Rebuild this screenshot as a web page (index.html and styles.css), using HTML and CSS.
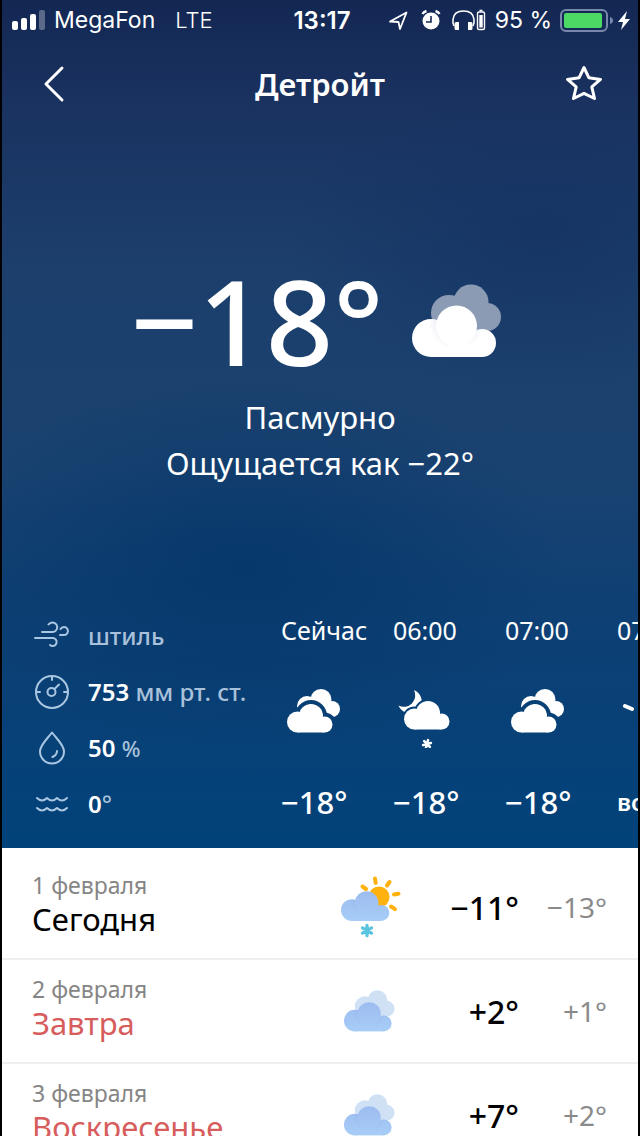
FILE: index.html
```
<!DOCTYPE html>
<html lang="ru">

<head>
    <meta charset="UTF-8">
    <meta name="viewport" content="width=device-width, initial-scale=1.0">
    <title>Погода — Детройт</title>
    <link rel="stylesheet" href="styles.css">
</head>

<body>
    <!-- общие фигуры для иконок -->
    <svg class="sprite" aria-hidden="true">
        <defs>
            <linearGradient id="blueCloud" gradientUnits="userSpaceOnUse" x1="0" y1="21" x2="0" y2="73">
                <stop offset="0" stop-color="#9dbcf0"/>
                <stop offset="1" stop-color="#a7cdf7"/>
            </linearGradient>
            <radialGradient id="shade" gradientUnits="userSpaceOnUse" cx="44.500" cy="38" r="28">
                <stop offset="0.700" stop-color="#6a78c0" stop-opacity="0.1"/>
                <stop offset="1" stop-color="#6a78c0" stop-opacity="0"/>
            </radialGradient>
            <clipPath id="lobes">
                <circle cx="19" cy="54" r="19"/>
                <circle cx="70" cy="59" r="14"/>
            </clipPath>
            <g id="front">
                <circle cx="19" cy="54" r="19"/>
                <circle cx="70" cy="59" r="14"/>
                <path d="M19 50h51v23H19z"/>
                <circle cx="44.500" cy="38" r="28" clip-path="url(#lobes)" class="shade"/>
                <circle cx="44.500" cy="42" r="20.500"/>
            </g>
            <g id="back">
                <circle cx="37" cy="29" r="18"/>
                <circle cx="59" cy="18" r="17.500"/>
                <circle cx="75" cy="33" r="14"/>
                <path d="M37 26h38v20H37z"/>
            </g>
            <g id="frontSmall">
                <circle cx="10.500" cy="33" r="10.500"/>
                <circle cx="24" cy="27" r="12"/>
                <circle cx="37.500" cy="35.500" r="8"/>
                <path d="M10.500 31h27v12.500h-27z"/>
            </g>
            <g id="backSmall">
                <circle cx="20" cy="17" r="10"/>
                <circle cx="34" cy="10.500" r="10.500"/>
                <circle cx="45" cy="20" r="8"/>
                <path d="M20 16h25v12H20z"/>
            </g>
            <g id="flake" fill="none" stroke="currentColor" stroke-linecap="round" stroke-width="3">
                <path d="M0-4.700v9.400M-4.100-2.400l8.200 4.800M-4.100 2.400l8.200-4.800"/>
            </g>
            <mask id="cut" maskUnits="userSpaceOnUse" x="-10" y="-10" width="80" height="80">
                <rect x="-10" y="-10" width="80" height="80" fill="#fff"/>
                <use href="#frontSmall" fill="#000" stroke="#000" stroke-width="8"/>
            </mask>
            <mask id="cutMoon" maskUnits="userSpaceOnUse" x="-10" y="-10" width="80" height="80">
                <rect x="-10" y="-10" width="80" height="80" fill="#fff"/>
                <use href="#frontSmall" fill="#000" stroke="#000" stroke-width="4"/>
            </mask>
            <symbol id="clouds" viewBox="0 0 90 74">
                <use href="#back" class="cloud-back"/>
                <use href="#front" class="cloud-front"/>
            </symbol>
            <symbol id="clouds-white" viewBox="0 0 64 64">
                <g transform="translate(6 5)" fill="#fff">
                    <use href="#backSmall" mask="url(#cut)"/>
                    <use href="#frontSmall"/>
                </g>
            </symbol>
            <symbol id="night-snow" viewBox="0 0 64 64">
                <g transform="translate(11 2)" fill="#fff">
                    <path mask="url(#cutMoon)" d="M10 4A12 12 0 1 1-5.500 19.500A11.500 11.500 0 0 0 10 4z"/>
                    <use href="#frontSmall"/>
                </g>
                <use href="#flake" transform="translate(34 60) rotate(15) scale(.85)"/>
            </symbol>
        </defs>
    </svg>

    <div class="app">
        <section class="hero">
            <div class="status">
                <div class="status-left">
                    <svg width="34" height="22" viewBox="0 0 34 22" fill="#fff" aria-hidden="true">
                        <rect x="0" y="12" width="6" height="9" rx="2"/>
                        <rect x="9" y="9" width="6" height="12" rx="2"/>
                        <rect x="18" y="5" width="6" height="16" rx="2"/>
                        <rect x="27" y="1" width="6" height="20" rx="2" opacity=".3"/>
                    </svg>
                    <span>MegaFon</span>
                    <span class="network">LTE</span>
                </div>
                <time class="clock">13:17</time>
                <div class="status-right">
                    <svg width="98" height="24" viewBox="0 0 98 24" fill="none" stroke="#fff" aria-hidden="true">
                        <path d="M1 13.500L17.500 4.500 11 21 9.500 14z" stroke-width="1.800" stroke-linejoin="round"/>
                        <circle cx="42" cy="13" r="8.500" fill="#fff" stroke="none"/>
                        <path d="M42 8v6h-5" stroke="#152a56" stroke-width="1.600"/>
                        <path d="M33.500 6q1-2 4-3M50.500 6q-1-2-4-3" stroke-width="2.400"/>
                        <path d="M65 18q-1.500-3-1-6.500C64.500 6 68.500 3 74.500 3S84.500 6 85 11.500q.5 3.500-1 6.500" stroke-width="1.600"/>
                        <path d="M67 14h3v8h-3q-1.500 0-1.500-1.500v-5q0-1.500 1.500-1.500zM79 14h3q1.500 0 1.500 1.500v5q0 1.500-1.500 1.500h-3z" fill="#fff" stroke="none"/>
                        <rect x="88.500" y="4" width="7" height="17.500" rx="1.500" stroke-width="1.400"/>
                        <path d="M90.500 2.500h3" stroke-width="1.500"/>
                        <rect x="90.300" y="7" width="3.400" height="12.500" fill="#fff" stroke="none"/>
                    </svg>
                    <span>95 %</span>
                    <svg width="72" height="24" viewBox="0 0 72 24" aria-hidden="true">
                        <rect x="1" y="2" width="46" height="21" rx="5" fill="none" stroke="#7987ab" stroke-width="2"/>
                        <rect x="4" y="5" width="38" height="15" rx="2" fill="#4cd964"/>
                        <path d="M50 9q3 1 3 3.500t-3 3.500z" fill="#7987ab"/>
                        <path d="M67 3l-9 11h5l-2 8 9-11h-5z" fill="#fff"/>
                    </svg>
                </div>
            </div>

            <header class="nav">
                <button type="button" class="nav-button" aria-label="Назад">
                    <svg width="44" height="44" viewBox="0 0 44 44" fill="none" stroke="#fff" stroke-width="3" stroke-linecap="round" stroke-linejoin="round">
                        <path d="M28 6L12 22l16 16"/>
                    </svg>
                </button>
                <h1>Детройт</h1>
                <button type="button" class="nav-button" aria-label="Добавить в избранное">
                    <svg width="44" height="44" viewBox="0 0 44 44" fill="none" stroke="#fff" stroke-width="3" stroke-linejoin="round">
                        <path d="M22 5.500l4.800 10.200 11.700 1.700-8.700 7.500 2.700 11.600L22 31.300 11.500 36.500l2.700-11.600-8.700-7.500 11.700-1.700z"/>
                    </svg>
                </button>
            </header>

            <div class="now">
                <div class="now-temp">
                    <span>−18°</span>
                    <svg class="now-icon" role="img" aria-label="Пасмурно"><use href="#clouds"/></svg>
                </div>
                <p>Пасмурно</p>
                <p>Ощущается как −22°</p>
            </div>

            <div class="bottom">
                <ul class="details">
                    <li>
                        <svg viewBox="0 0 36 36" aria-hidden="true">
                            <path d="M1 20h17.500a4 4 0 1 1-2.500 7M8 14h11a4.800 4.800 0 1 0-4.500-7.500M26 17h4a4 4 0 1 0-3.500-6"/>
                        </svg>
                        <span>штиль</span>
                    </li>
                    <li>
                        <svg viewBox="0 0 36 36" aria-hidden="true">
                            <circle cx="18" cy="18" r="16"/>
                            <circle cx="17.500" cy="18" r="4"/>
                            <path d="M20.500 15l4.500-4.500M18 3v3M3 18h3M30 18h3"/>
                        </svg>
                        <span><b>753</b> мм рт. ст.</span>
                    </li>
                    <li>
                        <svg viewBox="0 0 36 36" aria-hidden="true">
                            <path d="M18 2.500C13 9 6 15 6 21.500a12 12 0 0 0 24 0C30 15 23 9 18 2.500zM23 21q0 4-4.500 6"/>
                        </svg>
                        <span><b>50</b> <small>%</small></span>
                    </li>
                    <li>
                        <svg viewBox="0 0 36 36" aria-hidden="true">
                            <path d="M3 12q5 5 10 0 5 5 10 0 5 5 10 0M3 22q5 5 10 0 5 5 10 0 5 5 10 0"/>
                        </svg>
                        <span><b>0</b>°</span>
                    </li>
                </ul>
                <ul class="hours">
                    <li>
                        <time>Сейчас</time>
                        <svg aria-hidden="true"><use href="#clouds-white"/></svg>
                        <b>−18°</b>
                    </li>
                    <li>
                        <time>06:00</time>
                        <svg aria-hidden="true"><use href="#night-snow"/></svg>
                        <b>−18°</b>
                    </li>
                    <li>
                        <time>07:00</time>
                        <svg aria-hidden="true"><use href="#clouds-white"/></svg>
                        <b>−18°</b>
                    </li>
                    <li>
                        <time>07:43</time>
                        <svg viewBox="0 0 64 64" fill="none" stroke="#fff" stroke-width="4" stroke-linecap="round" aria-hidden="true">
                            <path d="M8 22l7 3M24 8l3 6M44 8l-3 6M60 22l-7 3M24 36a10 10 0 0 1 20 0"/>
                        </svg>
                        <b class="event">восход</b>
                    </li>
                </ul>
            </div>
        </section>

        <ul class="days">
            <li>
                <div class="day">
                    <time>1 февраля</time>
                    <strong>Сегодня</strong>
                </div>
                <svg class="day-icon" viewBox="0 0 64 64" aria-hidden="true">
                    <circle cx="40" cy="22" r="10.500" fill="#ffb10e"/>
                    <path d="M36 3.500l.7 4.500M50.500 7L48 10.500M55 19.500l4.500-.8M52 31.500l4 2.700M23.500 11.500l3.500 2.500" fill="none" stroke="#ffb10e" stroke-width="4" stroke-linecap="round"/>
                    <use href="#front" fill="url(#blueCloud)" transform="translate(2 4) scale(.575)"/>
                    <use href="#flake" class="snow" transform="translate(28 55.500) scale(1.100)"/>
                </svg>
                <b>−11°</b>
                <span class="night">−13°</span>
            </li>
            <li>
                <div class="day">
                    <time>2 февраля</time>
                    <strong class="weekend">Завтра</strong>
                </div>
                <svg class="day-icon blue" viewBox="0 0 64 64" aria-hidden="true"><use href="#clouds" x="5" y="11" width="51" height="42"/></svg>
                <b>+2°</b>
                <span class="night">+1°</span>
            </li>
            <li>
                <div class="day">
                    <time>3 февраля</time>
                    <strong class="weekend">Воскресенье</strong>
                </div>
                <svg class="day-icon blue" viewBox="0 0 64 64" aria-hidden="true"><use href="#clouds" x="5" y="11" width="51" height="42"/></svg>
                <b>+7°</b>
                <span class="night">+2°</span>
            </li>
        </ul>
    </div>
</body>

</html>
```
FILE: styles.css
```
* {
    box-sizing: border-box;
}

body {
    margin: 0;
    font-family: "Noto Sans", sans-serif;
    background-color: #000;
}

ul {
    list-style: none;
    margin: 0;
    padding: 0;
}

.sprite {
    position: absolute;
    width: 0;
    height: 0;
}

.app {
    --cloud-back: #8c9bb4;
    --cloud-front: #fff;
    display: flex;
    flex-direction: column;
    height: 100vh;
    margin: 0 2px;
    overflow: hidden;
    background-color: #fff;
}

.hero {
    flex: none;
    color: #fff;
    background:
        radial-gradient(ellipse 50% 22% at 38% 67%, rgba(4, 54, 106, 0.8), transparent),
        radial-gradient(ellipse 40% 18% at 85% 28%, rgba(18, 48, 98, 0.6), transparent),
        linear-gradient(#132753 0%, #1a3260 12%, #1c3f6c 32%, #1a4270 55%, #0e4074 72%, #01427a 100%);
}

/* строка состояния */
.status {
    display: grid;
    grid-template-columns: 1fr auto 1fr;
    align-items: center;
    height: 40px;
    padding: 0 6px 0 10px;
    font-family: Inter, sans-serif;
    font-size: 23px;
}

.status-left,
.status-right {
    display: flex;
    align-items: center;
}

.status-left {
    gap: 8px;
}

.status-right {
    justify-content: flex-end;
    gap: 8px;
    white-space: nowrap;
}

.network {
    margin-left: 12px;
    font-size: 22px;
    font-weight: 300;
}

.clock {
    font-size: 24px;
    font-weight: 600;
}

/* шапка */
.nav {
    display: flex;
    align-items: center;
    justify-content: space-between;
    height: 88px;
    padding: 0 32px;
}

.nav-button {
    display: flex;
    padding: 0;
    border: none;
    background: none;
    cursor: pointer;
}

h1 {
    margin: 0;
    font-size: 31px;
    font-weight: 600;
}

/* текущая погода */
.now {
    padding: 120px 0 122px;
    text-align: center;
}

.now-temp {
    display: flex;
    align-items: center;
    justify-content: center;
    gap: 28px;
    padding-right: 8px;
    font-size: 118px;
    font-weight: 500;
    line-height: 146px;
}

.now-icon {
    width: 90px;
    height: 74px;
}

.cloud-back {
    fill: var(--cloud-back);
}

.cloud-front {
    fill: var(--cloud-front);
}

.shade {
    fill: url(#shade);
}

.blue {
    --cloud-back: #d0e0f5;
    --cloud-front: url(#blueCloud);
}

.now p {
    margin: 0;
    font-size: 31px;
    line-height: 46px;
}

/* подробности и почасовой прогноз */
.bottom {
    display: flex;
    padding-bottom: 16px;
}

.details {
    flex: none;
    width: 279px;
    padding-left: 32px;
}

.details li {
    display: flex;
    align-items: center;
    gap: 18px;
    height: 56px;
    font-size: 24px;
    font-weight: 500;
    color: #a9c1da;
    white-space: nowrap;
}

.details span {
    padding-bottom: 2px;
}

.details svg {
    width: 36px;
    height: 36px;
    fill: none;
    stroke: #a9c6e2;
    stroke-width: 2;
    stroke-linecap: round;
    stroke-linejoin: round;
}

.details b {
    font-weight: 600;
    color: #fff;
}

.details small {
    font-size: 22px;
}

.hours {
    display: flex;
    flex: 1;
    min-width: 0;
    overflow: hidden;
}

.hours li {
    display: flex;
    flex: none;
    flex-direction: column;
    justify-content: space-between;
    width: 112px;
    padding: 6px 0 14px;
}

.hours time {
    font-size: 25px;
    line-height: 32px;
}

.hours svg {
    width: 64px;
    height: 64px;
}

.hours b {
    font-size: 31px;
    font-weight: 500;
    line-height: 32px;
}

.hours .event {
    font-size: 24px;
    font-weight: 600;
}

/* прогноз по дням */
.days {
    padding-top: 8px;
}

.days li {
    display: grid;
    grid-template-columns: 1fr 64px 116px 88px;
    align-items: center;
    height: 104px;
    padding: 0 31px 0 30px;
    border-bottom: 2px solid #eee;
}

.day {
    padding-bottom: 8px;
}

.day time {
    display: block;
    font-size: 23px;
    line-height: 32px;
    color: #858585;
}

.day strong {
    display: block;
    font-size: 31px;
    font-weight: 400;
    line-height: 36px;
}

.day .weekend {
    color: #d75d5d;
}

.day-icon {
    width: 64px;
    height: 64px;
}

.snow {
    color: #5bc4e0;
}

.days b {
    font-size: 32px;
    font-weight: 500;
    text-align: right;
}

.night {
    font-size: 28px;
    color: #8a8a8a;
    text-align: right;
}
```
